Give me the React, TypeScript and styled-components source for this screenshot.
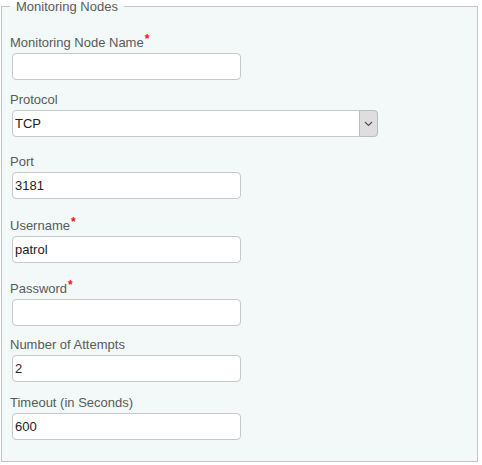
import React from "react";
import styled, { createGlobalStyle } from "styled-components";

const GlobalStyle = createGlobalStyle`
  html, body {
    margin: 0;
    padding: 0;
    background: #ffffff;
  }
  body {
    font-family: "Liberation Sans", Arial, sans-serif;
    font-size: 13px;
  }
`;

const Page = styled.div`
  width: 482px;
  height: 465px;
  padding: 0 0 0 1px;
  box-sizing: border-box;
`;

const Fieldset = styled.fieldset`
  width: 477px;
  height: 462px;
  margin: 0;
  padding: 0 8px;
  box-sizing: border-box;
  border: 1px solid #c4c4c4;
  background: #f2f9f8;
`;

const Legend = styled.legend`
  padding: 0 6px;
  margin-left: 0;
  color: #5c5c5c;
  font-size: 13px;
  line-height: 13px;
`;

const Field = styled.div<{ $top: number }>`
  display: flex;
  flex-direction: column;
  align-items: flex-start;
  margin-top: ${(p) => p.$top}px;
`;

const Label = styled.label`
  color: #5a5a5a;
  font-size: 13px;
  line-height: 16px;
  height: 16px;
  margin-bottom: 2px;
`;

const Star = styled.span`
  color: #e8141e;
  font-weight: bold;
  font-size: 12px;
  position: relative;
  top: -4px;
  margin-left: 1px;
`;

const TextInput = styled.input`
  width: 229px;
  height: 27px;
  margin: 0 0 0 2px;
  padding: 0 2px;
  box-sizing: border-box;
  border: 1px solid #c8c8c8;
  border-radius: 4px;
  background: #ffffff;
  font-family: "Liberation Sans", Arial, sans-serif;
  font-size: 13px;
  color: #222;
  outline: none;
`;

const SelectWrap = styled.div`
  position: relative;
  width: 366px;
  height: 27px;
  margin-left: 2px;
`;

const Select = styled.select`
  appearance: none;
  width: 100%;
  height: 100%;
  margin: 0;
  padding: 0 2px;
  box-sizing: border-box;
  border: 1px solid #c8c8c8;
  border-radius: 4px;
  background: #ffffff;
  font-family: "Liberation Sans", Arial, sans-serif;
  font-size: 13px;
  color: #222;
  outline: none;
`;

const Arrow = styled.div`
  position: absolute;
  right: 0;
  top: 0;
  width: 17px;
  height: 25px;
  border: 1px solid #bcbcbc;
  border-radius: 0 4px 4px 0;
  background: #dedede;
  display: flex;
  align-items: center;
  justify-content: center;
  pointer-events: none;
`;

type FieldProps = {
  label: string;
  value?: string;
  required?: boolean;
  top: number;
};

function InputField({ label, value = "", required, top }: FieldProps) {
  return (
    <Field $top={top}>
      <Label>
        {label}
        {required && <Star>*</Star>}
      </Label>
      <TextInput defaultValue={value} />
    </Field>
  );
}

export default function App() {
  return (
    <Page>
      <GlobalStyle />
      <Fieldset>
        <Legend>Monitoring Nodes</Legend>
        <InputField label="Monitoring Node Name" required top={22} />
        <Field $top={12}>
          <Label>Protocol</Label>
          <SelectWrap>
            <Select defaultValue="TCP">
              <option>TCP</option>
              <option>UDP</option>
            </Select>
            <Arrow>
              <svg width="9" height="6" viewBox="0 0 9 6">
                <path d="M1 1 L4.5 4.5 L8 1" fill="none" stroke="#555" strokeWidth="1.2" />
              </svg>
            </Arrow>
          </SelectWrap>
        </Field>
        <InputField label="Port" value="3181" top={17} />
        <InputField label="Username" value="patrol" required top={19} />
        <InputField label="Password" required top={18} />
        <InputField label="Number of Attempts" value="2" top={11} />
        <InputField label="Timeout (in Seconds)" value="600" top={13} />
      </Fieldset>
    </Page>
  );
}
